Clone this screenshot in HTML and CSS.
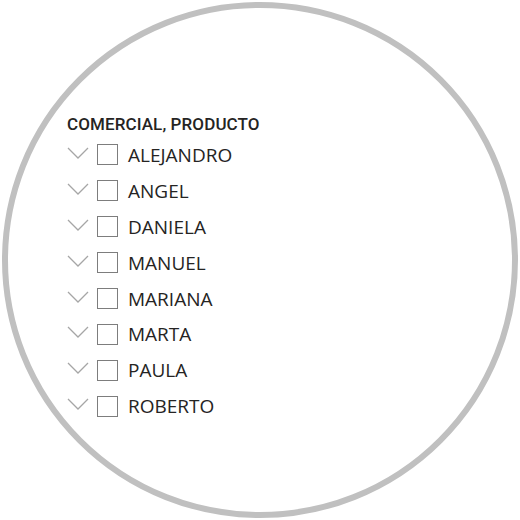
FILE: index.html
```html
<!DOCTYPE html>
<html>
<head>
    <title>Segmentación</title>
    <link rel="stylesheet" href="styles.css">
</head>
<body>
    <div class="circle">
        <div class="slicer">
            <h2 class="slicer-title">COMERCIAL, PRODUCTO</h2>
            <ul class="slicer-list">
                <li class="slicer-item">
                    <svg class="chevron" width="22" height="12" viewBox="0 0 22 12"><polyline points="1,1 11,11 21,1"/></svg>
                    <span class="box"></span>
                    <span class="label">ALEJANDRO</span>
                </li>
                <li class="slicer-item">
                    <svg class="chevron" width="22" height="12" viewBox="0 0 22 12"><polyline points="1,1 11,11 21,1"/></svg>
                    <span class="box"></span>
                    <span class="label">ANGEL</span>
                </li>
                <li class="slicer-item">
                    <svg class="chevron" width="22" height="12" viewBox="0 0 22 12"><polyline points="1,1 11,11 21,1"/></svg>
                    <span class="box"></span>
                    <span class="label">DANIELA</span>
                </li>
                <li class="slicer-item">
                    <svg class="chevron" width="22" height="12" viewBox="0 0 22 12"><polyline points="1,1 11,11 21,1"/></svg>
                    <span class="box"></span>
                    <span class="label">MANUEL</span>
                </li>
                <li class="slicer-item">
                    <svg class="chevron" width="22" height="12" viewBox="0 0 22 12"><polyline points="1,1 11,11 21,1"/></svg>
                    <span class="box"></span>
                    <span class="label">MARIANA</span>
                </li>
                <li class="slicer-item">
                    <svg class="chevron" width="22" height="12" viewBox="0 0 22 12"><polyline points="1,1 11,11 21,1"/></svg>
                    <span class="box"></span>
                    <span class="label">MARTA</span>
                </li>
                <li class="slicer-item">
                    <svg class="chevron" width="22" height="12" viewBox="0 0 22 12"><polyline points="1,1 11,11 21,1"/></svg>
                    <span class="box"></span>
                    <span class="label">PAULA</span>
                </li>
                <li class="slicer-item">
                    <svg class="chevron" width="22" height="12" viewBox="0 0 22 12"><polyline points="1,1 11,11 21,1"/></svg>
                    <span class="box"></span>
                    <span class="label">ROBERTO</span>
                </li>
            </ul>
        </div>
    </div>
</body>
</html>
```

FILE: styles.css
```css
body {
    margin: 0;
    background: #ffffff;
    font-family: "Open Sans", Arial, sans-serif;
}

.circle {
    box-sizing: border-box;
    width: 516px;
    height: 516px;
    margin: 2px;
    border: 6px solid #c0c0c0;
    border-radius: 50%;
    padding: 104px 0 0 59px; /* puts the title at x=67 */
}

.slicer-title {
    margin: 0 0 1px 0;
    font-family: Roboto, Arial, sans-serif;
    font-weight: 500;
    font-size: 17px;
    line-height: 24px;
    color: #252423;
    letter-spacing: 0.1px;
}

.slicer-list {
    list-style: none;
    margin: 0;
    padding: 0;
}

.slicer-item {
    display: flex;
    align-items: center;
    height: 35.9px;
}

.chevron {
    margin-top: -4px;
    fill: none;
    stroke: #a6a6a6;
    stroke-width: 1.3;
}

.box {
    box-sizing: border-box;
    width: 21px;
    height: 21px;
    margin-left: 8px;
    border: 1.5px solid #7d7d7d;
}

.label {
    margin-left: 10px;
    font-size: 19px;
    color: #252423;
}
```
